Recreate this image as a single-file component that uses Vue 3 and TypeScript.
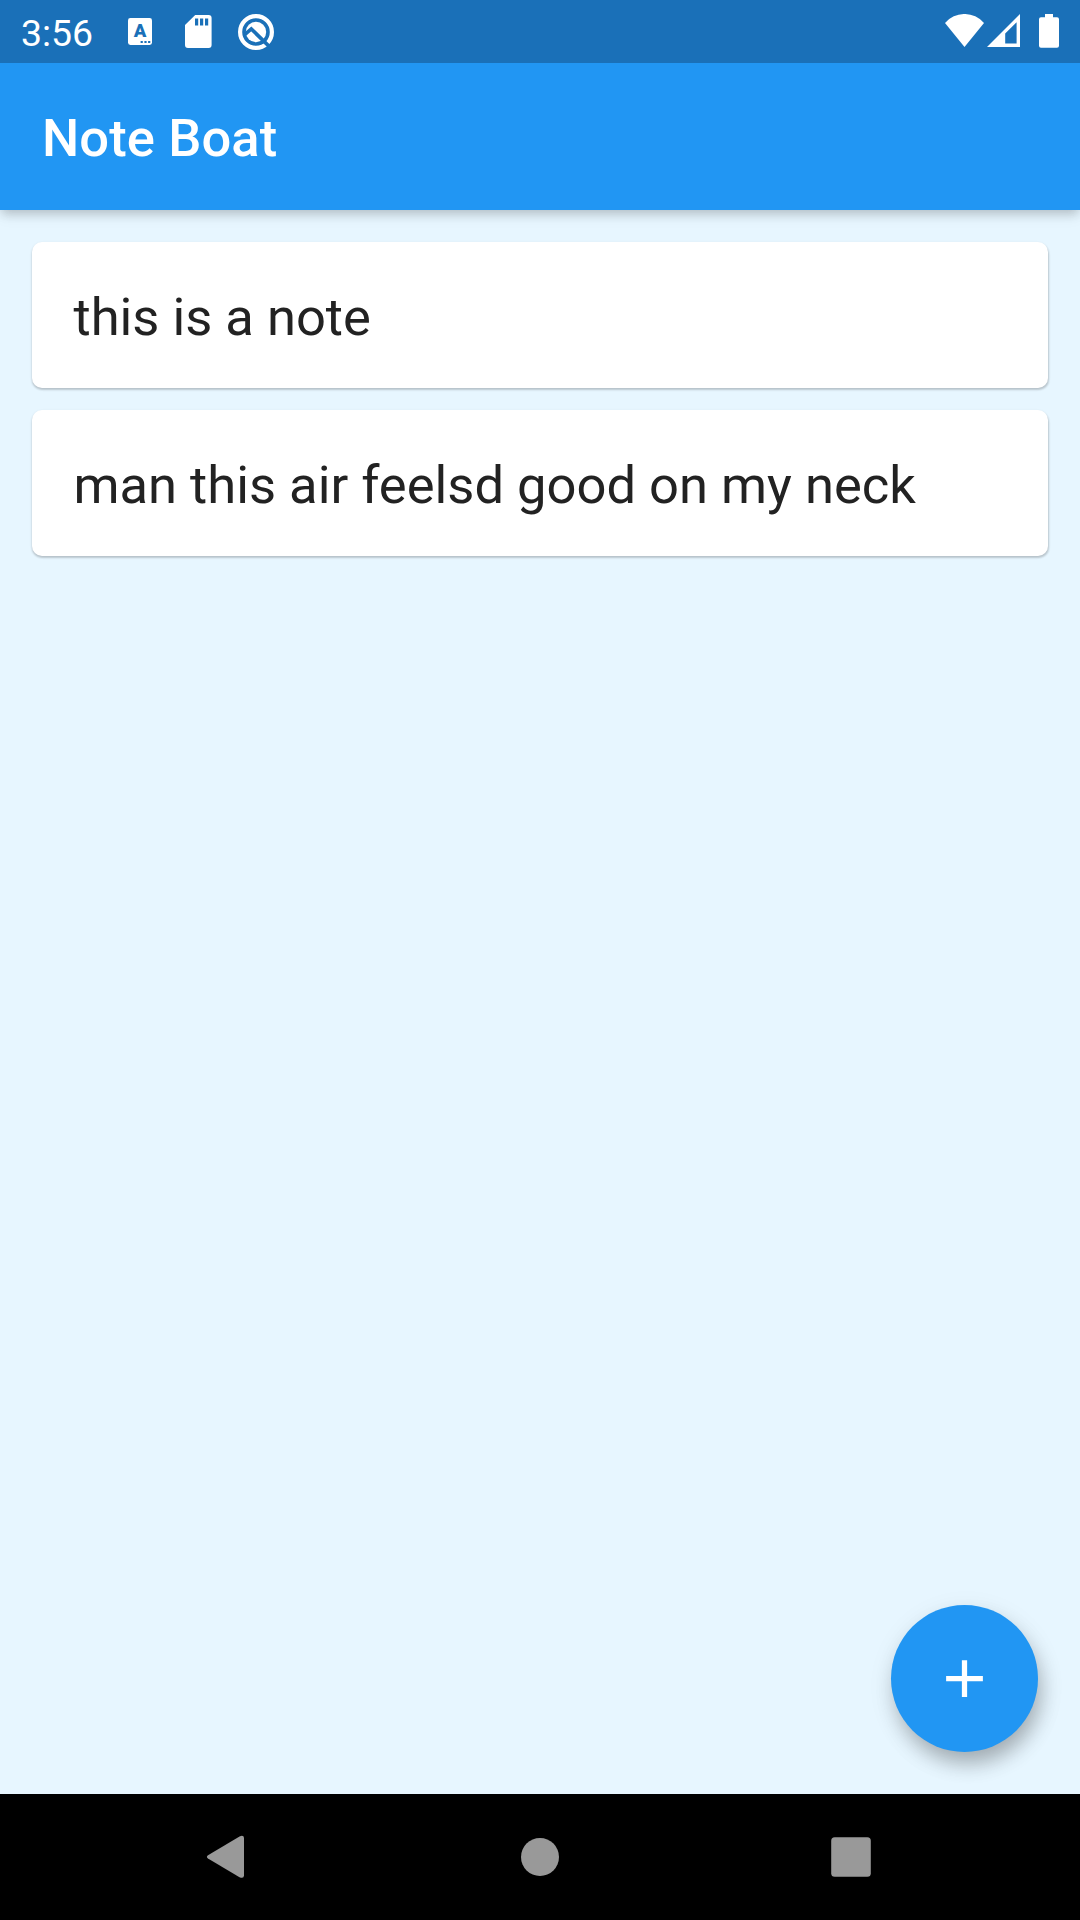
<script setup lang="ts">
import { ref } from 'vue'

interface Note {
  id: number
  text: string
}

const title = ref<string>('Note Boat')
const notes = ref<Note[]>([
  { id: 1, text: 'this is a note' },
  { id: 2, text: 'man this air feelsd good on my neck' },
])
</script>

<template>
  <div class="screen">
    <header class="status-bar">
      <span class="clock">3:56</span>
      <svg class="icon-keyboard" width="24" height="27" viewBox="0 0 24 27">
        <rect width="24" height="27" rx="2.4" fill="#fff" />
        <text class="keyboard-letter" x="12" y="19.3" text-anchor="middle">A</text>
        <path d="M12.6 23h2.2v2h-2.2zM16.4 23h2.2v2h-2.2zM20.1 23h2.2v2h-2.2z" fill="#1a70b8" />
      </svg>
      <svg class="icon-sd" width="27" height="33" viewBox="0 0 27 33">
        <path
          fill="#fff"
          fill-rule="evenodd"
          d="M10.2 0H23.6Q26.6 0 26.6 3V30Q26.6 33 23.6 33H3Q0 33 0 30V9.9ZM10 3.6V10.6H13.2V3.6ZM15 3.6V10.6H18.2V3.6ZM20 3.6V10.6H23.2V3.6Z"
        />
      </svg>
      <svg class="icon-q" width="38" height="38" viewBox="0 0 38 38">
        <circle cx="19" cy="19" r="15.9" fill="none" stroke="#fff" stroke-width="4.2" />
        <circle cx="19" cy="19" r="10.2" fill="#fff" />
        <path d="M7.4 21.9 14.3 16 32.4 33.6" fill="none" stroke="#1a70b8" stroke-width="3.6" />
      </svg>
      <span class="spacer"></span>
      <svg class="icon-wifi" width="39" height="33" viewBox="0 0 39 33">
        <path d="M0 9A25.6 25.6 0 0 1 39 9L19.5 33Z" fill="#fff" />
      </svg>
      <svg class="icon-signal" width="33" height="33" viewBox="0 0 33 33">
        <path fill="#fff" fill-rule="evenodd" d="M33 0V33H0ZM29.6 8.2 18.2 19.6V29.5H29.6Z" />
      </svg>
      <svg class="icon-battery" width="20" height="34" viewBox="0 0 20 34">
        <path
          fill="#fff"
          d="M6 0H14V3.3H18Q20 3.3 20 5.3V31.8Q20 33.8 18 33.8H2Q0 33.8 0 31.8V5.3Q0 3.3 2 3.3H6Z"
        />
      </svg>
    </header>

    <div class="app-bar">
      <h1 class="title">{{ title }}</h1>
    </div>

    <main class="content">
      <ul class="notes">
        <li v-for="note in notes" :key="note.id" class="note">{{ note.text }}</li>
      </ul>
      <button class="fab" type="button" aria-label="Add note">
        <svg width="63" height="63" viewBox="0 0 24 24">
          <path d="M19 13h-6v6h-2v-6H5v-2h6V5h2v6h6v2z" fill="#fff" />
        </svg>
      </button>
    </main>

    <nav class="nav-bar">
      <svg width="44" height="44" viewBox="0 0 44 44">
        <path
          d="M5 20.2 36.5 1.4Q40.8 -0.3 41 3V40.6Q40.8 44 36.5 42.2L5 23.6Q2.8 21.9 5 20.2Z"
          fill="#999"
        />
      </svg>
      <svg class="nav-home" width="44" height="44" viewBox="0 0 44 44">
        <circle cx="22" cy="22" r="19" fill="#999" />
      </svg>
      <svg width="44" height="44" viewBox="0 0 44 44">
        <rect x="2.2" y="2.2" width="39.6" height="39.6" rx="3.5" fill="#999" />
      </svg>
    </nav>
  </div>
</template>

<style>
body {
  margin: 0;
}
</style>

<style scoped>
.screen {
  width: 1080px;
  height: 1920px;
  display: flex;
  flex-direction: column;
  overflow: hidden;
  background: #e7f6ff;
  font-family: Roboto, sans-serif;
}

.status-bar {
  flex: none;
  box-sizing: border-box;
  height: 63px;
  padding: 0 21px;
  display: flex;
  align-items: center;
  background: #1a70b8;
  z-index: 2;
}

.status-bar svg {
  flex: none;
}

.clock {
  width: 71px;
  margin-top: 2px;
  font-size: 37.4px;
  line-height: 44px;
  color: #fff;
  white-space: nowrap;
}

.icon-keyboard {
  margin-left: 36px;
}

.keyboard-letter {
  font-family: Roboto, sans-serif;
  font-size: 18.5px;
  font-weight: 900;
  fill: #1a70b8;
}

.icon-sd {
  margin-left: 33px;
}

.icon-q {
  margin-left: 25px;
}

.spacer {
  flex: 1;
}

.icon-wifi {
  margin-right: 3px;
  margin-bottom: 2px;
}

.icon-signal {
  margin-right: 19px;
  margin-bottom: 2px;
}

.icon-battery {
  margin-bottom: 1px;
}

.app-bar {
  flex: none;
  box-sizing: border-box;
  height: 147px;
  padding: 2px 42px 0;
  display: flex;
  align-items: center;
  background: #2196f3;
  box-shadow:
    0 5px 10px -2px rgba(0, 0, 0, 0.17),
    0 8px 13px 0 rgba(0, 0, 0, 0.05),
    0 3px 12px 0 rgba(0, 0, 0, 0.04);
  z-index: 1;
}

.title {
  margin: 0;
  font-size: 52.5px;
  line-height: 62px;
  font-weight: 500;
  letter-spacing: 0.1px;
  color: #fff;
}

.content {
  flex: 1;
  display: flex;
  flex-direction: column;
  justify-content: space-between;
}

.notes {
  list-style: none;
  margin: 0;
  padding: 32px;
  display: flex;
  flex-direction: column;
  gap: 22px;
}

.note {
  box-sizing: border-box;
  height: 146px;
  padding: 4px 41.5px 0;
  display: flex;
  align-items: center;
  border-radius: 10px;
  background: #fff;
  box-shadow:
    0.5px 2px 2px 0 rgba(0, 0, 0, 0.15),
    0 1px 3px 0 rgba(0, 0, 0, 0.1);
  font-size: 52.5px;
  line-height: 62px;
  color: #222;
  white-space: nowrap;
}

.fab {
  align-self: flex-end;
  width: 147px;
  height: 147px;
  margin: 0 42px 42px 0;
  padding: 0;
  border: 0;
  border-radius: 50%;
  display: flex;
  align-items: center;
  justify-content: center;
  background: #2196f3;
  box-shadow:
    4px 13px 20px -2px rgba(0, 0, 0, 0.25),
    2px 8px 28px 0 rgba(0, 0, 0, 0.09);
}

.nav-bar {
  flex: none;
  box-sizing: border-box;
  height: 126px;
  padding: 0 207px 0 203px;
  display: flex;
  align-items: center;
  justify-content: space-between;
  background: #000;
  z-index: 1;
}

.nav-home {
  margin-left: 4px;
}
</style>
